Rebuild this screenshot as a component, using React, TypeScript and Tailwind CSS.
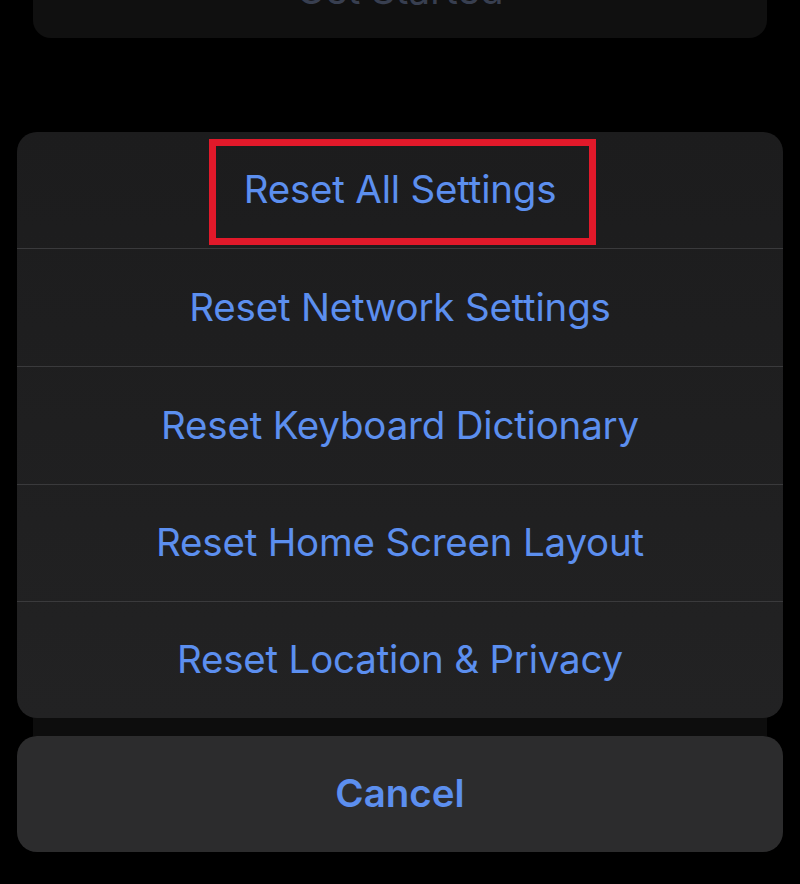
const ITEMS = [
  { label: 'Reset All Settings', h: 'h-[116px]' },
  { label: 'Reset Network Settings', h: 'h-[118px]' },
  { label: 'Reset Keyboard Dictionary', h: 'h-[118px]' },
  { label: 'Reset Home Screen Layout', h: 'h-[117px]' },
  { label: 'Reset Location & Privacy', h: 'h-[117px]' },
];

export default function App() {
  return (
    <div
      className="h-[884px] w-[800px] overflow-hidden bg-black"
      style={{ fontFamily: 'Inter, "Noto Sans", sans-serif' }}
    >
      {/* card behind the sheet, mostly scrolled off the top */}
      <div className="mx-[33px] -mt-[40px] flex h-[78px] items-start justify-center rounded-[18px] bg-[#101010]">
        <span className="mt-[11px] text-[38.5px] leading-none text-[#383f50]">Get Started</span>
      </div>

      <div className="mx-[17px] mt-[94px] overflow-hidden rounded-[20px] bg-gradient-to-b from-[#1c1c1d] to-[#222223]">
        {ITEMS.map((item, i) => (
          <div
            key={item.label}
            className={`relative flex ${item.h} items-center justify-center ${
              i > 0 ? 'border-t border-[#3a3a3c]' : ''
            }`}
          >
            <span className="text-[38.5px] tracking-[-0.2px] text-[#5c8fef]">{item.label}</span>
            {i === 0 && (
              <div className="absolute left-[192px] top-[7px] h-[106px] w-[387px] border-[7px] border-[#e1192a]" />
            )}
          </div>
        ))}
      </div>

      <div className="mx-[33px] h-[18px] bg-[#0d0d0d]" />

      <div className="mx-[17px] flex h-[116px] items-center justify-center rounded-[20px] bg-[#2c2c2d]">
        <span className="text-[38.5px] font-semibold text-[#5c8fef]">Cancel</span>
      </div>
    </div>
  );
}
